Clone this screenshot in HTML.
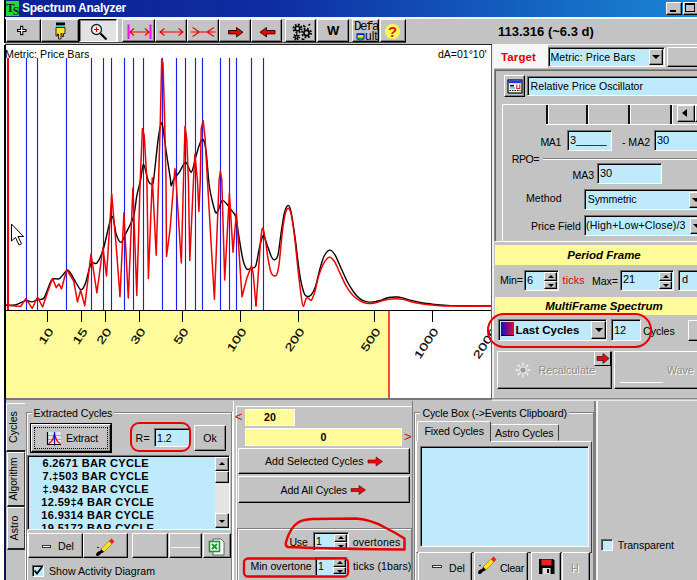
<!DOCTYPE html>
<html><head><meta charset="utf-8">
<style>
html,body{margin:0;padding:0}
body{width:697px;height:580px;overflow:hidden;background:#c3c3c3;font-family:"Liberation Sans",sans-serif;font-size:11px;color:#000;position:relative}
div,span{position:absolute;box-sizing:border-box;white-space:nowrap}
.btn{background:#c3c3c3;border:1px solid;border-color:#fff #000 #000 #fff;box-shadow:inset -1px -1px 0 #808080}
.sk{background:#bfeafc;border:1px solid;border-color:#707070 #fff #fff #707070;box-shadow:inset 1px 1px 0 #000}
.t{line-height:14px;height:14px;font-size:10.6px}
.yl{background:#fffb9a}
.dd{background:#c3c3c3;border:1px solid;border-color:#fff #000 #000 #fff;box-shadow:inset -1px -1px 0 #808080}
.dd:after{content:"";position:absolute;left:50%;top:50%;margin:-2px 0 0 -4px;border:4px solid transparent;border-top:4px solid #000;border-bottom:0}
.sp{background:#c3c3c3;border:1px solid;border-color:#fff #000 #000 #fff;box-shadow:inset -1px -1px 0 #808080}
.up:after{content:"";position:absolute;left:50%;top:50%;margin:-2px 0 0 -3px;border:3px solid transparent;border-bottom:3px solid #000;border-top:0}
.dn:after{content:"";position:absolute;left:50%;top:50%;margin:-1px 0 0 -3px;border:3px solid transparent;border-top:3px solid #000;border-bottom:0}
svg{position:absolute;left:0;top:0}
.lr{font-weight:bold;font-size:11px;letter-spacing:0.35px;white-space:pre;height:13px;line-height:13px}
</style></head><body>
<!-- TITLE BAR -->
<div style="left:0;top:0;width:697px;height:17px;background:linear-gradient(90deg,#0c2090 0%,#0e2ea2 40%,#1670c8 85%,#1a86d8 100%)"></div>
<div style="left:0;top:0;width:5px;height:580px;background:#fff"></div>
<div style="left:6px;top:1px;width:13px;height:15px;background:#22d83a"></div>
<div style="left:6px;top:0px;width:14px;height:16px;font:bold 13px 'Liberation Serif',serif;line-height:16px;color:#222;letter-spacing:-2px">T<span style="position:relative;top:3px;font-size:12px">S</span></div>
<div style="left:22px;top:1px;font-weight:bold;font-size:12px;letter-spacing:-0.25px;line-height:15px;color:#fff">Spectrum Analyzer</div>
<div class="btn" style="left:666px;top:2px;width:16px;height:13px"></div>
<div style="left:670px;top:10px;width:6px;height:2px;background:#000"></div>
<div class="btn" style="left:683px;top:2px;width:16px;height:13px"></div>
<div style="left:685px;top:3px;width:10px;height:9px;border:1px solid #000;border-top:2px solid #000"></div>
<div style="left:4px;top:0;width:2px;height:43px;background:#000"></div>
<!-- TOOLBAR -->
<div style="left:5px;top:17px;width:692px;height:2px;background:#f4f4f4"></div>
<div style="left:5px;top:42px;width:401px;height:1px;background:#444"></div><div style="left:492px;top:44px;width:205px;height:1px;background:#f4f4f4"></div>
<div style="left:5px;top:44px;width:487px;height:1px;background:#222"></div>

<div class="btn" style="left:6px;top:19px;width:35px;height:23px"></div>
<div class="btn" style="left:41px;top:19px;width:38px;height:23px"></div>
<div style="left:79px;top:19px;width:38px;height:23px;background:#e2e2e2;border:1px solid;border-color:#000 #fff #fff #000;box-shadow:inset 1px 1px 0 #808080"></div>
<div style="left:117px;top:19px;width:1px;height:23px;background:#fff"></div>
<div class="btn" style="left:122px;top:19px;width:33px;height:23px"></div>
<div class="btn" style="left:155px;top:19px;width:32px;height:23px"></div>
<div class="btn" style="left:187px;top:19px;width:32px;height:23px"></div>
<div class="btn" style="left:219px;top:19px;width:32px;height:23px"></div>
<div class="btn" style="left:251px;top:19px;width:31px;height:23px"></div>
<div class="btn" style="left:285px;top:19px;width:31px;height:23px"></div>
<div class="btn" style="left:317px;top:19px;width:32px;height:23px"></div>
<div class="btn" style="left:352px;top:19px;width:27px;height:23px"></div>
<div class="btn" style="left:380px;top:19px;width:26px;height:23px"></div>
<div style="left:327px;top:24px;font:bold 13px 'Liberation Sans',sans-serif;line-height:14px">W</div>
<div style="left:354px;top:22px;font:12.5px 'Liberation Mono',monospace;line-height:11px;letter-spacing:-1.5px">Defa</div>
<div style="left:365px;top:31px;font:12px 'Liberation Sans',sans-serif;line-height:11px;text-decoration:underline">ult</div>
<div style="left:570px;top:24px;font-weight:bold;font-size:13px;line-height:15px;width:0"><span style="left:-72px;top:0">113.316 (~6.3 d)</span></div>
<svg width="697" height="48" viewBox="0 0 697 48">
<!-- plus -->
<path d="M17 30.500h9.500M21.700 25.800v9.500" stroke="#000" stroke-width="3.200" fill="none"/><path d="M18.200 30.500h7.100M21.700 27v7.100" stroke="#fff" stroke-width="1.200" fill="none"/>
<!-- hand -->
<rect x="56" y="22.5" width="9" height="3" fill="#000"/><rect x="56" y="25.5" width="9" height="1.5" fill="#30d0d0"/>
<path d="M56 27.5h9v6h-1.500v3h-1.500v-3h-1v5.500h-2.500v-5h-1v2h-1.500z" fill="#ffe030" stroke="#000" stroke-width="0.8"/>
<!-- magnifier -->
<circle cx="96.500" cy="29.500" r="5" fill="#f4f4f4" stroke="#222" stroke-width="1.300"/>
<path d="M94 29.500h5M96.500 27v5" stroke="#e00000" stroke-width="1.200"/>
<path d="M100.500 33.500l6 6" stroke="#000" stroke-width="2.200"/>
<!-- |<->| -->
<path d="M128.500 24.500v14.500M150.500 24.500v14.500" stroke="#ff00ff" stroke-width="2"/>
<path d="M130 32h19M134 28.500l-4 3.500l4 3.500M145 28.500l4 3.500l-4 3.500" stroke="#f00000" stroke-width="1.200" fill="none"/>
<!-- <-> -->
<path d="M160 32h23M164.500 28.500l-4.500 3.500l4.500 3.500M178.500 28.500l4.500 3.500l-4.500 3.500" stroke="#f00000" stroke-width="1.200" fill="none"/>
<!-- >-< -->
<path d="M191 32h24.500M192.500 27.500l7 4.500l-7 4.500M214 27.500l-7 4.500l7 4.500" stroke="#f00000" stroke-width="1.100" fill="none"/>
<!-- arrow right -->
<path d="M228.500 30.500h8v-3l6.500 4.700l-6.500 4.700v-3h-8z" fill="#f00000" stroke="#200" stroke-width="0.900"/>
<!-- arrow left -->
<path d="M275 30.500h-8.500v-3l-6.500 4.700l6.500 4.700v-3h8.500z" fill="#f00000" stroke="#200" stroke-width="0.900"/>
<!-- gears -->
<g fill="none" stroke="#000">
<circle cx="297.500" cy="28.500" r="2.300" stroke-width="1.600"/>
<circle cx="297.500" cy="28.500" r="4" stroke-width="2" stroke-dasharray="1.700 1.440"/>
<circle cx="306.500" cy="33" r="2.600" stroke-width="1.600"/>
<circle cx="306.500" cy="33" r="4.400" stroke-width="2" stroke-dasharray="1.800 1.655"/>
<circle cx="296.500" cy="37" r="1.500" stroke-width="1.400"/>
<circle cx="296.500" cy="37" r="2.800" stroke-width="1.600" stroke-dasharray="1.300 1.200"/>
<path d="M303 25.500l2.500 1.500M308.500 25.500l1.500-1.500M301.500 39l3 .5" stroke-width="1.500"/>
</g>
<!-- default icon -->
<path d="M357 34h7v4.500q-3.500 3 -7 0z" fill="#f0e020" stroke="#0020c0" stroke-width="1.200"/>
<path d="M357.500 37.500h6v1q-3 2.500 -6 0z" fill="#20a040"/>
<rect x="357" y="33.500" width="7" height="1.500" fill="#0020c0"/>
<!-- ? -->
<circle cx="392.500" cy="31.500" r="7.500" fill="#ffff50"/>
<text x="392.500" y="36.500" text-anchor="middle" font-family="Liberation Sans" font-weight="bold" font-size="15" fill="#e81010">?</text>
</svg>

<!-- CHART -->
<div style="left:5px;top:45px;width:486px;height:353px;background:#fff"></div>
<div class="yl" style="left:5px;top:311px;width:384px;height:87px"></div>
<svg width="491" height="400" viewBox="0 0 491 400" style="overflow:hidden">
<g stroke="#1c1cf0" stroke-width="1.15"><path d="M26.5 58V310"/><path d="M37.5 58V310"/><path d="M66.5 58V310"/><path d="M91.5 58V310"/><path d="M103.5 58V310"/><path d="M111.5 58V310"/><path d="M124.5 58V310"/><path d="M133.5 58V310"/><path d="M143.5 58V310"/><path d="M162.5 58V310"/><path d="M176.5 58V310"/><path d="M185.5 58V310"/><path d="M195.5 58V310"/><path d="M202.5 58V310"/><path d="M220.5 58V310"/><path d="M229.5 58V310"/><path d="M236.5 58V310"/><path d="M251.5 58V310"/><path d="M263.5 58V310"/></g>
<path d="M5.5 305.5C6.9 305.4 12.6 305.7 15.5 305.0C18.4 304.3 23.4 301.0 25.8 300.6C28.2 300.2 30.6 302.1 32.3 301.9C34.0 301.7 35.8 299.9 37.5 299.3C39.2 298.7 42.0 300.8 44.0 298.0C46.0 295.2 49.5 282.7 51.7 279.9C53.9 277.1 57.2 280.0 59.5 278.6C61.8 277.2 65.7 270.3 67.7 270.3C69.7 270.3 71.9 275.9 73.7 278.6C75.5 281.3 78.9 288.8 80.6 289.5C82.3 290.2 83.8 287.5 85.3 283.8C86.8 280.1 89.3 266.6 91.0 263.6C92.7 260.6 95.1 265.1 96.9 263.0C98.7 260.9 101.3 255.5 103.4 248.9C105.5 242.3 109.9 218.5 111.7 216.5C113.5 214.5 115.0 230.9 116.3 234.6C117.6 238.3 119.5 242.8 121.0 242.4C122.5 242.0 124.8 235.7 126.6 232.0C128.4 228.3 132.1 221.7 133.6 216.5C135.1 211.3 135.8 201.1 136.8 195.9C137.8 190.7 139.6 184.5 140.6 180.0C141.6 175.5 142.4 164.3 143.5 164.3C144.6 164.3 146.9 177.2 148.0 180.0C149.1 182.8 150.7 184.2 151.5 184.2C152.3 184.2 152.7 186.4 153.6 180.0C154.5 173.6 157.0 147.9 158.1 139.7C159.2 131.5 160.7 123.9 161.5 122.9C162.3 121.9 162.9 128.0 163.7 133.0C164.5 138.0 166.1 151.0 167.1 157.6C168.1 164.2 169.8 174.8 170.4 178.9C171.0 183.0 170.7 186.0 171.2 186.0C171.7 186.0 172.6 181.0 173.8 179.0C175.0 177.0 177.7 174.6 179.4 172.2C181.1 169.8 183.8 162.1 185.5 162.1C187.2 162.1 189.9 172.8 191.3 172.2C192.7 171.6 194.4 161.6 195.6 157.6C196.8 153.6 198.5 146.8 199.6 144.2C200.7 141.6 202.4 138.4 203.4 139.7C204.4 141.0 205.5 146.6 206.3 153.1C207.1 159.6 208.3 178.7 209.2 185.5C210.1 192.3 211.4 197.1 212.3 201.0C213.2 204.9 214.8 211.4 215.7 212.7C216.6 214.0 217.4 211.7 218.3 210.0C219.2 208.3 220.9 201.4 222.1 200.5C223.3 199.6 225.2 202.2 226.5 203.6C227.8 205.0 229.9 208.2 231.2 210.0C232.5 211.8 234.5 212.6 235.6 216.5C236.7 220.4 238.0 231.1 239.0 237.2C240.0 243.3 241.7 254.7 242.8 259.2C243.9 263.7 245.5 267.7 246.7 269.0C247.9 270.3 250.1 268.8 251.4 268.3C252.7 267.8 254.6 268.8 255.8 265.7C257.0 262.6 258.6 250.6 259.7 246.3C260.8 242.0 262.2 235.7 263.3 235.5C264.4 235.3 266.0 242.1 267.2 245.2C268.4 248.3 270.4 254.9 271.5 257.0C272.6 259.1 273.8 260.1 274.7 259.8C275.6 259.5 277.1 258.8 278.0 254.9C278.9 251.0 280.3 238.3 281.2 232.3C282.1 226.3 283.4 216.7 284.4 212.9C285.4 209.1 287.3 205.4 288.3 205.4C289.3 205.4 290.3 208.1 291.3 212.9C292.3 217.7 294.0 230.1 295.2 238.7C296.4 247.3 298.3 265.5 299.5 273.2C300.7 280.9 302.7 289.2 303.8 292.5C304.9 295.8 305.9 296.1 307.0 296.4C308.1 296.7 310.1 296.2 311.3 294.7C312.5 293.2 314.4 289.8 315.6 286.1C316.8 282.4 318.7 273.2 319.9 268.9C321.1 264.6 322.8 258.7 324.2 256.0C325.6 253.3 328.1 250.3 329.6 250.1C331.1 249.9 333.5 252.5 335.0 254.9C336.5 257.3 338.7 263.0 340.4 266.7C342.1 270.4 345.0 277.2 346.8 280.7C348.6 284.2 351.5 288.9 353.3 291.5C355.1 294.1 357.9 297.2 359.7 298.6C361.5 300.0 364.2 301.1 366.2 301.6C368.2 302.1 371.5 302.2 373.7 302.0C375.9 301.8 379.2 300.7 381.3 300.1C383.4 299.5 386.3 297.9 388.6 297.5C390.9 297.1 395.2 296.9 397.2 297.0C399.2 297.1 400.4 297.4 402.4 297.9C404.4 298.4 408.1 299.7 411.0 300.4C413.9 301.1 419.6 302.4 423.0 303.0C426.4 303.6 431.1 304.0 435.0 304.4C438.9 304.8 442.6 305.4 450.6 305.6C458.6 305.8 485.2 305.9 491.0 306.0" fill="none" stroke="#000" stroke-width="1.4" stroke-linejoin="round"/>
<path d="M5.5 304.4L13.0 305.7L20.7 306.5L25.8 298.7L32.3 308.3L37.5 297.2L42.6 307.0L47.8 291.5L52.5 278.6L56.3 287.6L58.9 283.8L61.5 289.0L66.7 269.5L73.7 281.2L77.5 301.9L80.6 290.2L84.8 305.7L91.0 254.0L96.9 292.8L102.9 247.5L106.5 276.0L111.7 193.8L116.5 250.0L120.0 296.7L123.9 212.7L128.3 298.0L132.9 188.0L136.8 295.4L140.2 180.0L142.4 128.5L144.2 135.2L146.9 180.0L148.4 278.6L152.3 178.0L156.2 255.3L158.6 180.0L160.4 117.3L161.7 59.0L163.0 63.5L164.4 110.5L166.0 180.0L166.5 256.6L170.0 230.0L174.9 168.8L176.0 180.0L181.3 263.0L183.5 180.0L185.0 126.2L186.8 139.7L188.4 180.0L189.8 260.5L193.5 180.0L194.9 154.3L197.4 180.0L198.9 211.4L200.3 180.0L201.2 128.5L203.2 120.6L205.2 139.7L207.4 180.0L214.4 299.3L219.1 180.0L220.4 171.0L221.8 180.0L224.7 279.9L229.4 193.3L233.0 252.2L236.4 212.7L242.0 296.7L246.7 278.6L251.4 265.7L253.2 273.4L256.0 306.5" fill="none" stroke="#f00000" stroke-width="1.5" stroke-linejoin="round"/><path d="M256.0 306.5C256.3 302.0 257.5 285.0 258.2 275.3C258.9 265.6 260.1 245.5 260.8 238.7C261.5 231.9 262.2 227.7 262.9 228.0C263.6 228.3 264.7 236.3 265.5 240.9C266.3 245.5 267.4 255.6 268.3 260.3C269.2 265.0 270.4 271.5 271.5 273.6C272.6 275.7 275.2 276.6 276.3 275.3C277.4 274.0 278.1 270.7 279.0 264.6C279.9 258.5 281.4 239.7 282.3 232.3C283.2 224.9 284.6 216.3 285.5 212.9C286.4 209.5 287.5 207.9 288.3 208.2C289.1 208.5 290.4 210.7 291.3 215.1C292.2 219.5 293.8 230.4 294.8 238.7C295.8 247.0 297.4 264.6 298.4 273.2C299.4 281.8 300.9 294.2 301.6 299.0C302.3 303.8 302.8 306.5 303.4 306.5C304.0 306.5 305.2 300.2 305.9 299.0C306.6 297.8 307.3 297.7 308.1 297.9C308.9 298.1 310.4 300.9 311.3 300.1C312.2 299.3 313.5 296.0 314.6 292.5C315.7 289.0 317.5 279.6 318.9 275.3C320.3 271.0 322.7 265.0 324.2 262.4C325.7 259.8 328.1 257.2 329.6 257.2C331.1 257.2 333.5 260.0 335.0 262.4C336.5 264.8 338.7 270.7 340.4 274.2C342.1 277.7 345.0 284.1 346.8 287.2C348.6 290.3 351.5 293.9 353.3 295.8C355.1 297.7 357.9 299.6 359.7 300.7C361.5 301.8 364.2 302.9 366.2 303.3C368.2 303.7 371.5 303.6 373.7 303.3C375.9 303.0 379.2 301.7 381.3 301.1C383.4 300.5 385.6 299.5 388.6 299.2C391.6 298.9 399.2 298.8 402.4 299.2C405.6 299.6 408.1 301.0 411.0 301.7C413.9 302.4 419.6 303.5 423.0 304.0C426.4 304.5 431.1 305.0 435.0 305.3C438.9 305.6 442.6 306.0 450.6 306.1C458.6 306.2 485.2 306.3 491.0 306.3" fill="none" stroke="#f00000" stroke-width="1.5"/>
<path d="M5 45V398" stroke="#000" stroke-width="2"/><path d="M8 58V310" stroke="#f00000" stroke-width="2"/>
<path d="M5 310.500H491" stroke="#000" stroke-width="1"/>
<path d="M389 311V398" stroke="#f00000" stroke-width="1.400"/>
<g stroke="#000" stroke-width="1"><path d="M47.5 311V322"/><path d="M81.5 311V322"/><path d="M105.5 311V322"/><path d="M139.5 311V322"/><path d="M182.5 311V322"/><path d="M240.5 311V322"/><path d="M298.5 311V322"/><path d="M374.5 311V322"/><path d="M432.5 311V322"/><path d="M491.5 311V322"/></g>
<g font-family="Liberation Sans" font-size="15.2" fill="#000" stroke="#000" stroke-width="0.25" letter-spacing="0.2"><text transform="translate(54.0,331.0) rotate(-56) scale(1,0.72)" text-anchor="end">10</text><text transform="translate(88.0,331.0) rotate(-56) scale(1,0.72)" text-anchor="end">15</text><text transform="translate(112.0,331.0) rotate(-56) scale(1,0.72)" text-anchor="end">20</text><text transform="translate(146.0,331.0) rotate(-56) scale(1,0.72)" text-anchor="end">30</text><text transform="translate(189.0,331.0) rotate(-56) scale(1,0.72)" text-anchor="end">50</text><text transform="translate(247.0,331.0) rotate(-56) scale(1,0.72)" text-anchor="end">100</text><text transform="translate(305.0,331.0) rotate(-56) scale(1,0.72)" text-anchor="end">200</text><text transform="translate(381.0,331.0) rotate(-56) scale(1,0.72)" text-anchor="end">500</text><text transform="translate(439.0,331.0) rotate(-56) scale(1,0.72)" text-anchor="end">1000</text><text transform="translate(498.0,331.0) rotate(-56) scale(1,0.72)" text-anchor="end">2000</text></g>
<path d="M11.500 224v17l4-3.500l3.500 7.500l2.500-1.200l-3.500-7.300h5.500z" fill="#fff" stroke="#000" stroke-width="1"/>
</svg>
<div style="left:5px;top:48px;font-size:10.7px;line-height:13px">Metric: Price Bars</div>
<div style="left:438px;top:48px;font-size:10.5px;line-height:13px">dA=01°10'</div>
<div style="left:5px;top:398px;width:487px;height:2px;background:#777"></div>
<div style="left:491px;top:45px;width:1px;height:353px;background:#666"></div>
<!-- RIGHT PANEL -->

<div style="left:492px;top:45px;width:2px;height:353px;background:#f0f0f0"></div>
<div style="left:494px;top:45px;width:54px;height:23px;background:#f6f6f6"></div>
<div class="t" style="left:501.0px;top:50px;font-weight:bold;font-size:11.5px;color:#e00000;letter-spacing:0.12px">Target</div>
<div class="sk" style="left:548px;top:47px;width:117px;height:20px"></div>
<div class="t" style="left:550.4px;top:50px;letter-spacing:0.08px">Metric: Price Bars</div>
<div class="dd" style="left:649px;top:49px;width:14px;height:16px"></div>
<div class="btn" style="left:667px;top:47px;width:34px;height:20px"></div>
<!-- sunken big panel -->
<div style="left:494px;top:69px;width:210px;height:173px;border:1px solid;border-color:#8a8a8a #fff #fff #8a8a8a;box-shadow:inset 1px 1px 0 #666"></div>
<div class="btn" style="left:504px;top:75px;width:21px;height:22px"></div>
<svg width="697" height="100" viewBox="0 0 697 100"><rect x="508" y="80" width="14" height="13" fill="#fff" stroke="#000" stroke-width="1.200"/><rect x="508.600" y="80.600" width="12.800" height="2.600" fill="#1838f0"/><path d="M510 85.700h4" stroke="#000" stroke-width="1.600"/><path d="M510 88h5" stroke="#20d0d0" stroke-width="1.500"/><path d="M516.800 84.500v4h3v-4" stroke="#e01010" stroke-width="1.100" fill="none"/><path d="M509.500 90.500h11" stroke="#000" stroke-width="1" stroke-dasharray="1.500 1"/></svg>
<div class="sk" style="left:527px;top:76px;width:175px;height:20px"></div>
<div class="t" style="left:530.6px;top:79px;letter-spacing:-0.00px">Relative Price Oscillator</div>
<!-- tab strip -->
<div style="left:502px;top:104px;width:200px;height:137px;border-top:1px solid #fff;border-left:1px solid #fff"></div>
<div style="left:546px;top:105px;width:3px;height:19px;background:#111;border-right:1px solid #fff;border-left:0"></div>
<div style="left:586px;top:105px;width:3px;height:19px;background:#111;border-right:1px solid #fff;border-left:0"></div>
<div style="left:628px;top:105px;width:3px;height:19px;background:#111;border-right:1px solid #fff;border-left:0"></div>
<div style="left:670px;top:105px;width:3px;height:19px;background:#111;border-right:1px solid #fff;border-left:0"></div>
<div style="left:546px;top:124px;width:160px;height:1px;background:#fff"></div>
<div class="btn" style="left:677px;top:105px;width:18px;height:17px"></div>
<div style="left:682px;top:109px;border:4px solid transparent;border-right:5px solid #000;border-left:0;width:0;height:0"></div>
<div class="btn" style="left:695px;top:105px;width:18px;height:17px"></div>
<!-- MA rows -->
<div class="t" style="left:540.4px;top:135px;letter-spacing:-0.40px">MA1</div>
<div class="sk" style="left:567px;top:130px;width:45px;height:21px"></div>
<div class="t" style="left:570px;top:132.5px;font-size:11px">3_____</div>
<div class="t" style="left:622.0px;top:135px;letter-spacing:-0.05px">- MA2</div>
<div class="sk" style="left:654px;top:130px;width:50px;height:21px"></div>
<div class="t" style="left:657px;top:132.5px;font-size:11px">30</div>
<div class="t" style="left:511.8px;top:152px;letter-spacing:-0.49px">RPO=</div>
<div style="left:543px;top:158px;width:160px;height:2px;border-top:1px solid #808080;border-bottom:1px solid #fff"></div>
<div class="t" style="left:572.6px;top:168px;letter-spacing:-0.13px">MA3</div>
<div class="sk" style="left:597px;top:163px;width:65px;height:21px"></div>
<div class="t" style="left:600px;top:165.5px;font-size:11px">30</div>
<div class="t" style="left:526.0px;top:191px;letter-spacing:0.04px">Method</div>
<div class="sk" style="left:584px;top:189px;width:120px;height:21px"></div>
<div class="t" style="left:587.8px;top:192px;letter-spacing:-0.15px">Symmetric</div>
<div class="dd" style="left:689px;top:192px;width:14px;height:16px"></div>
<div class="t" style="left:531.0px;top:219px;letter-spacing:-0.02px">Price Field</div>
<div class="sk" style="left:584px;top:215px;width:120px;height:21px"></div>
<div class="t" style="left:586.0px;top:218px;letter-spacing:0.17px">(High+Low+Close)/3</div>
<div class="dd" style="left:690px;top:218px;width:14px;height:16px"></div>
<!-- Period Frame -->
<div class="yl" style="left:495px;top:245px;width:202px;height:20px"></div>
<div style="left:604px;top:248px;width:0;height:14px"><span style="left:-60px;width:120px;text-align:center;font:italic bold 11.5px 'Liberation Sans',sans-serif;line-height:14px">Period Frame</span></div>
<div class="t" style="left:500.0px;top:273px;letter-spacing:-0.07px">Min=</div>
<div class="sk" style="left:524px;top:270px;width:35px;height:21px"></div>
<div class="t" style="left:527px;top:273px;font-size:11px">6</div>
<div class="sp up" style="left:544px;top:272px;width:13px;height:9px"></div>
<div class="sp dn" style="left:544px;top:281px;width:13px;height:8px"></div>
<div class="t" style="left:562.5px;top:273px;color:#e00000;letter-spacing:0.22px">ticks</div>
<div class="t" style="left:592.0px;top:274px;letter-spacing:-0.05px">Max=</div>
<div class="sk" style="left:620px;top:270px;width:54px;height:21px"></div>
<div class="t" style="left:623px;top:272px;font-size:11px">21</div>
<div class="sp up" style="left:659px;top:272px;width:13px;height:9px"></div>
<div class="sp dn" style="left:659px;top:281px;width:13px;height:8px"></div>
<div class="sk" style="left:678px;top:270px;width:30px;height:21px"></div>
<div class="t" style="left:682px;top:272px;font-size:11px">d</div>
<!-- MultiFrame -->
<div class="yl" style="left:495px;top:297px;width:202px;height:18px"></div>
<div style="left:604px;top:299px;width:0;height:14px"><span style="left:-70px;width:140px;text-align:center;font:italic bold 11.5px 'Liberation Sans',sans-serif;line-height:14px">MultiFrame Spectrum</span></div>
<div class="sk" style="left:498px;top:319px;width:109px;height:22px"></div>
<div style="left:501px;top:322px;width:13px;height:14px;background:linear-gradient(90deg,#1010d0,#e01030);border-bottom:1px solid #000"></div>
<div class="t" style="left:515.4px;top:323px;font-weight:bold;font-size:11.5px;letter-spacing:-0.00px">Last Cycles</div>
<div class="dd" style="left:591px;top:321px;width:15px;height:18px"></div>
<div class="sk" style="left:611px;top:319px;width:30px;height:22px"></div>
<div class="t" style="left:614px;top:323px;font-size:11px">12</div>
<div class="t" style="left:643px;top:324px">Cycles</div>
<div class="btn" style="left:688px;top:320px;width:20px;height:21px"></div>
<div style="left:487px;top:313px;width:165px;height:35px;border:2px solid #e80000;border-radius:17px"></div>
<!-- Recalculate -->
<div class="btn" style="left:497px;top:351px;width:115px;height:38px"></div>
<div class="t" style="left:539.5px;top:364px;color:#fff;font-size:10.8px">Recalculate</div>
<div class="t" style="left:538.5px;top:363px;color:#8c8c8c;font-size:10.8px">Recalculate</div>
<div class="btn" style="left:614px;top:351px;width:90px;height:38px"></div>
<div style="left:620px;top:382px;width:43px;height:1px;background:#fff"></div>
<div class="t" style="left:668px;top:364px;color:#fff;font-size:10.6px">Wave</div>
<div class="t" style="left:667px;top:363px;color:#8c8c8c;font-size:10.6px">Wave</div>
<div style="left:594px;top:351px;width:17px;height:15px;background:#c3c3c3;border:1px solid;border-color:#fff #000 #000 #fff"></div>
<svg width="697" height="400" viewBox="0 0 697 400">
<path d="M597 356.500h6v-3l6 5l-6 5v-3h-6z" fill="#f00010" stroke="#400" stroke-width="0.700"/>
<g stroke="#f4f4f4" stroke-width="1.300" fill="none"><circle cx="523" cy="370" r="3.200" fill="#9a9a9a" stroke="#e8e8e8"/>
<path d="M523 362.500v3M523 374.500v3M515.500 370h3M527.500 370h3M517.700 364.700l2 2M526.300 373.300l2 2M517.700 375.300l2-2M526.300 366.700l2-2"/></g>
</svg>
<div style="left:492px;top:398px;width:205px;height:1px;background:#888"></div>

<!-- BOTTOM -->

<div style="left:5px;top:400px;width:692px;height:180px;background:#c3c3c3"></div>
<div style="left:4px;top:398px;width:2px;height:182px;background:#10104a"></div>
<!-- vertical tabs -->
<div style="left:6px;top:403px;width:20px;height:49px;border:1px solid;border-color:#fff transparent #202020 #fff;border-bottom-width:2px"></div>
<div style="left:7px;top:452px;width:18px;height:55px;border:1px solid;border-color:#fff #404040 #202020 #fff;border-bottom-width:2px"></div>
<div style="left:7px;top:507px;width:18px;height:43px;border:1px solid;border-color:#fff #404040 #202020 #fff;border-bottom-width:2px"></div>
<div style="left:25px;top:451px;width:1px;height:129px;background:#fff"></div>
<div style="left:13px;top:427px;width:0;height:0"><span class="t" style="left:-30px;top:-7px;width:60px;text-align:center;transform:rotate(-90deg);font-size:10.6px">Cycles</span></div>
<div style="left:14px;top:479px;width:0;height:0"><span class="t" style="left:-30px;top:-7px;width:60px;text-align:center;transform:rotate(-90deg);font-size:10.2px">Algorithm</span></div>
<div style="left:14px;top:528px;width:0;height:0"><span class="t" style="left:-30px;top:-7px;width:60px;text-align:center;transform:rotate(-90deg)">Astro</span></div>
<!-- Extracted Cycles group -->
<div style="left:26px;top:412px;width:206px;height:175px;border:1px solid #808080;box-shadow:inset 1px 1px 0 #fff, 1px 0 0 #fff"></div>
<div class="t" style="left:31.6px;top:406px;background:#c3c3c3;padding:0 2px;font-size:10.6px;letter-spacing:-0.05px">Extracted Cycles</div>
<div style="left:30px;top:423px;width:82px;height:30px;border:1px solid #000"></div>
<div class="btn" style="left:31px;top:424px;width:80px;height:28px"></div>
<div style="left:34px;top:427px;width:74px;height:22px;border:1px dotted #000"></div>
<div class="t" style="left:65.9px;top:431px;font-size:10.6px;letter-spacing:-0.12px">Extract</div>
<div class="t" style="left:135.6px;top:431px;letter-spacing:0.18px">R=</div>
<div class="sk" style="left:154px;top:428px;width:36px;height:19px"></div>
<div class="t" style="left:157px;top:431px;font-size:10.6px">1.2</div>
<div style="left:130px;top:422px;width:61px;height:30px;border:2px solid #e80000;border-radius:9px"></div>
<div class="btn" style="left:194px;top:425px;width:32px;height:26px"></div>
<div class="t" style="left:203.3px;top:431px;letter-spacing:-0.07px">Ok</div>
<!-- listbox -->
<div class="sk" style="left:27px;top:455px;width:203px;height:75px;overflow:hidden">
<div class="t lr" style="left:14.5px;top:1.0px">6.2671 BAR CYCLE</div>
<div class="t lr" style="left:14.5px;top:13.9px">7.&#8225;503 BAR CYCLE</div>
<div class="t lr" style="left:14.5px;top:26.8px">&#8225;.9432 BAR CYCLE</div>
<div class="t lr" style="left:13.3px;top:39.7px">12.59&#8225;4 BAR CYCLE</div>
<div class="t lr" style="left:13.3px;top:52.6px">16.9314 BAR CYCLE</div>
<div class="t lr" style="left:13.3px;top:65.5px">19.5172 BAR CYCLE</div>

</div>
<div style="left:215px;top:457px;width:14px;height:71px;background:#e4e4e4"></div>
<div class="sp up" style="left:215px;top:457px;width:14px;height:14px"></div>
<div class="sp" style="left:215px;top:471px;width:14px;height:12px"></div>
<div class="sp dn" style="left:215px;top:513px;width:14px;height:15px"></div>
<!-- buttons row -->
<div class="btn" style="left:28px;top:533px;width:55px;height:25px"></div>
<div style="left:42px;top:545px;width:9px;height:2px;background:#fff;border:1px solid #333;height:3px"></div>
<div class="t" style="left:58px;top:539px;font-size:10.6px">Del</div>
<div class="btn" style="left:83px;top:533px;width:45px;height:25px"></div>
<div class="btn" style="left:132px;top:533px;width:36px;height:25px"></div>
<div class="btn" style="left:169px;top:533px;width:33px;height:25px"></div>
<div style="left:171px;top:547px;width:29px;height:1px;background:#f4f4f4"></div>
<div class="btn" style="left:203px;top:533px;width:28px;height:25px"></div>
<div style="left:32px;top:565px;width:12px;height:12px;background:#bfeafc;border:1px solid;border-color:#606060 #fff #fff #606060;box-shadow:inset 1px 1px 0 #000"></div>
<div class="t" style="left:49.0px;top:564px;font-size:10.6px;letter-spacing:0.03px">Show Activity Diagram</div>
<!-- splitter -->
<div style="left:233px;top:401px;width:1px;height:179px;background:#fff"></div>
<div style="left:236px;top:406px;width:176px;height:1px;background:#fff"></div>
<div style="left:236px;top:406px;width:1px;height:174px;background:#fff"></div>
<!-- middle -->
<div class="t" style="left:235px;top:410px;color:#e80000;font-size:13px">&lt;</div>
<div class="yl" style="left:245px;top:409px;width:50px;height:17px;border:1px solid;border-color:#fff #fff #fff #fff"></div>
<div class="t" style="left:245px;top:410px;width:50px;text-align:center;font-weight:bold">20</div>
<div class="yl" style="left:245px;top:428px;width:157px;height:18px;border:1px solid #fff"></div>
<div class="t" style="left:245px;top:430px;width:157px;text-align:center;font-weight:bold">0</div>
<div class="t" style="left:404px;top:430px;color:#e80000;font-size:13px">&gt;</div>
<div class="btn" style="left:238px;top:448px;width:172px;height:26px"></div>
<div class="t" style="left:265.0px;top:454px;font-size:10.6px;letter-spacing:0.04px">Add Selected Cycles</div>
<div class="btn" style="left:238px;top:476px;width:172px;height:27px"></div>
<div class="t" style="left:280.4px;top:483px;font-size:10.6px;letter-spacing:-0.08px">Add All Cycles</div>
<div style="left:237px;top:528px;width:175px;height:60px;border:1px solid #808080;box-shadow:inset 1px 1px 0 #fff"></div>
<div class="t" style="left:289.4px;top:535px;font-size:10.6px;letter-spacing:-0.18px">Use</div>
<div class="sk" style="left:313px;top:532px;width:36px;height:19px"></div>
<div class="t" style="left:316px;top:534px">1</div>
<div class="sp up" style="left:334px;top:534px;width:13px;height:8px"></div>
<div class="sp dn" style="left:334px;top:542px;width:13px;height:7px"></div>
<div class="t" style="left:352.7px;top:535px;font-size:10.6px;letter-spacing:0.13px">overtones</div>
<div class="t" style="left:250.4px;top:559px;font-size:10.6px;letter-spacing:0.01px">Min overtone</div>
<div class="sk" style="left:315px;top:557px;width:33px;height:19px"></div>
<div class="t" style="left:318px;top:559px">1</div>
<div class="sp up" style="left:333px;top:559px;width:13px;height:8px"></div>
<div class="sp dn" style="left:333px;top:567px;width:13px;height:7px"></div>
<div class="t" style="left:353.0px;top:559px;font-size:10.6px;letter-spacing:0.05px">ticks (1bars)</div>
<!-- Cycle Box group -->
<div style="left:412px;top:401px;width:1px;height:179px;background:#808080"></div>
<div style="left:414px;top:412px;width:180px;height:175px;border:1px solid #808080;box-shadow:inset 1px 1px 0 #fff, 1px 0 0 #fff"></div>
<div class="t" style="left:420.4px;top:406px;background:#c3c3c3;padding:0 2px;font-size:10.6px;letter-spacing:-0.12px">Cycle Box (-&gt;Events Clipboard)</div>
<div style="left:416px;top:441px;width:176px;height:112px;border:1px solid;border-color:#fff #404040 #404040 #fff"></div>
<div style="left:417px;top:421px;width:74px;height:21px;background:#c3c3c3;border:1px solid;border-color:#fff #404040 transparent #fff;border-radius:2px 2px 0 0"></div>
<div class="t" style="left:424.4px;top:424px;font-size:10.6px;letter-spacing:-0.10px">Fixed Cycles</div>
<div style="left:491px;top:424px;width:68px;height:17px;border:1px solid;border-color:#fff #404040 transparent transparent;border-radius:0 2px 0 0"></div>
<div class="t" style="left:495.0px;top:426px;font-size:10.6px;letter-spacing:-0.08px">Astro Cycles</div>
<div class="sk" style="left:420px;top:446px;width:169px;height:101px"></div>
<div class="btn" style="left:418px;top:552px;width:54px;height:30px"></div>
<div style="left:432px;top:565px;width:10px;height:3px;background:#fff;border:1px solid #333"></div>
<div class="t" style="left:449px;top:561px;font-size:10.6px">Del</div>
<div class="btn" style="left:474px;top:552px;width:54px;height:30px"></div>
<div class="t" style="left:499.9px;top:561px;font-size:10.6px;letter-spacing:-0.25px">Clear</div>
<div class="btn" style="left:531px;top:552px;width:30px;height:30px"></div>
<div class="btn" style="left:562px;top:552px;width:28px;height:30px"></div>
<div class="t" style="left:572px;top:562px;color:#fff">H</div>
<div class="t" style="left:571px;top:561px;color:#909090">H</div>
<!-- right splitter -->
<div style="left:594px;top:401px;width:2px;height:179px;background:#808080"></div>
<div style="left:596px;top:401px;width:2px;height:179px;background:#f4f4f4"></div>
<div style="left:492px;top:400px;width:205px;height:1px;background:#e8e8e8"></div>
<div style="left:601px;top:539px;width:12px;height:12px;background:#bfeafc;border:1px solid;border-color:#606060 #fff #fff #606060;box-shadow:inset 1px 1px 0 #404040"></div>
<div class="t" style="left:617.7px;top:538px;font-size:10.6px;letter-spacing:-0.04px">Transparent</div>
<svg width="697" height="580" viewBox="0 0 697 580">
<!-- extract icon -->
<g stroke-width="1" fill="none"><rect x="48" y="432" width="13" height="12" fill="#e6e6e6" stroke="none"/><path d="M48 435.500h13M48 439.500h13" stroke="#f08080"/><path d="M49 439.500h3M57 435.500h3" stroke="#40d0d0"/><path d="M48.500 443.500q4-1 6-9.500q2 8.500 6 9.500" stroke="#e00000" stroke-width="1.200"/><path d="M54.500 432v13.500" stroke="#1010e0" stroke-width="1.300"/><path d="M47.500 432v12.500h13.500" stroke="#000" stroke-width="1.200"/></g>
<!-- checkmark -->
<path d="M34.500 570.500l2.500 3l5-6.500" stroke="#000" stroke-width="1.800" fill="none"/>
<!-- pencil icons -->
<g id="pen"><path d="M101 549l8-8l3 3l-8 8z" fill="#ffe020" stroke="#806000" stroke-width="0.500"/><path d="M109 541l2.500-2.500l3 3l-2.500 2.500z" fill="#f02020"/><path d="M101 549l3 3l-5 2.500z" fill="#000"/><path d="M97 552.500q3-3 4 0q-1 3.500-4 3.500q-2-1 0-3.500z" fill="#000"/><circle cx="98" cy="547.500" r="0.800" fill="#000"/></g>
<use href="#pen" x="382" y="18"/>
<!-- excel icon -->
<path d="M213 539h8l3 3v13h-11z" fill="#fff" stroke="#404040" stroke-width="0.800"/>
<rect x="209.500" y="541.500" width="10" height="10" fill="#f0fff0" stroke="#109a30" stroke-width="1.600"/>
<path d="M212 544l5 5M217 544l-5 5" stroke="#109a30" stroke-width="1.800"/>
<!-- red arrows on Add buttons -->
<path d="M368 460h8v-3l6.500 4.500l-6.500 4.500v-3h-8z" fill="#f00010" stroke="#500" stroke-width="0.600"/>
<path d="M351 488.500h8v-3l6.500 4.500l-6.500 4.500v-3h-8z" fill="#f00010" stroke="#500" stroke-width="0.600"/>
<!-- floppy -->
<path d="M539 559h14l1.500 1.500v13.500h-15.500z" fill="#000"/><rect x="541.500" y="559.500" width="10" height="6" fill="#f02020"/><rect x="542.500" y="568" width="8" height="6" fill="#e0e0e0"/><rect x="547" y="569" width="2" height="4" fill="#000"/>
<!-- red annotations -->
<path d="M286 542Q290 528 298 522.500Q303 519.500 312 519L356 518.500Q372 520 384 527Q396 533 404.500 538.500L404.500 549.500Q340 549 288 547Q285 546 286 542Z" fill="none" stroke="#e80000" stroke-width="2.400" stroke-linejoin="round"/>
<rect x="244" y="558.500" width="104" height="18" rx="4" fill="none" stroke="#e80000" stroke-width="2.300"/>
</svg>

</body></html>
